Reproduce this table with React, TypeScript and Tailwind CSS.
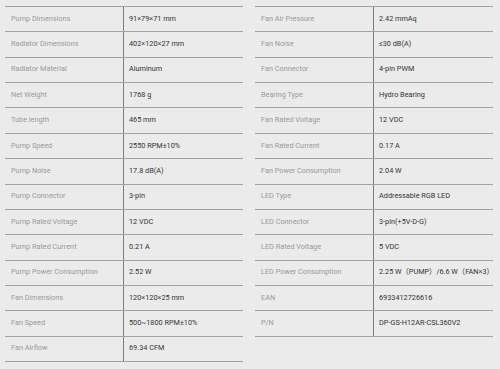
const LEFT_SPECS = [
  ['Pump Dimensions', '91×79×71 mm'],
  ['Radiator Dimensions', '402×120×27 mm'],
  ['Radiator Material', 'Aluminum'],
  ['Net Weight', '1768 g'],
  ['Tube length', '465 mm'],
  ['Pump Speed', '2550 RPM±10%'],
  ['Pump Noise', '17.8 dB(A)'],
  ['Pump Connector', '3-pin'],
  ['Pump Rated Voltage', '12 VDC'],
  ['Pump Rated Current', '0.21 A'],
  ['Pump Power Consumption', '2.52 W'],
  ['Fan Dimensions', '120×120×25 mm'],
  ['Fan Speed', '500~1800 RPM±10%'],
  ['Fan Airflow', '69.34 CFM'],
]

const RIGHT_SPECS = [
  ['Fan Air Pressure', '2.42 mmAq'],
  ['Fan Noise', '≤30 dB(A)'],
  ['Fan Connector', '4-pin PWM'],
  ['Bearing Type', 'Hydro Bearing'],
  ['Fan Rated Voltage', '12 VDC'],
  ['Fan Rated Current', '0.17 A'],
  ['Fan Power Consumption', '2.04 W'],
  ['LED Type', 'Addressable RGB LED'],
  ['LED Connector', '3-pin(+5V-D-G)'],
  ['LED Rated Voltage', '5 VDC'],
  ['LED Power Consumption', '2.25 W（PUMP）/6.6 W（FAN×3）'],
  ['EAN', '6933412726616'],
  ['P/N', 'DP-GS-H12AR-CSL360V2'],
]

const SpecTable = ({ rows }: { rows: string[][] }) => {
  return (
    <div className="flex flex-col w-[238px] border-t border-[#a3a3a3]">
      {rows.map((x, idx) => (
        <div key={'spec' + idx} className="grid grid-cols-2 h-[25.36px] border-b border-[#a3a3a3]">
          <div className="flex items-center pl-[6px] text-[#9a9a9a] border-r border-[#7a7a7a] whitespace-nowrap">
            {x[0]}
          </div>
          <div className="flex items-center pl-[5px] text-[#333] whitespace-nowrap">{x[1]}</div>
        </div>
      ))}
    </div>
  )
}

export default function App() {
  return (
    <div
      className="w-[500px] h-[369px] bg-[#ebebeb] flex gap-[12px] pl-[5px] pt-[6px] text-[7.3px] overflow-hidden"
      style={{ fontFamily: 'Roboto, "Noto Sans CJK SC", sans-serif' }}
    >
      <SpecTable rows={LEFT_SPECS} />
      <SpecTable rows={RIGHT_SPECS} />
    </div>
  )
}
